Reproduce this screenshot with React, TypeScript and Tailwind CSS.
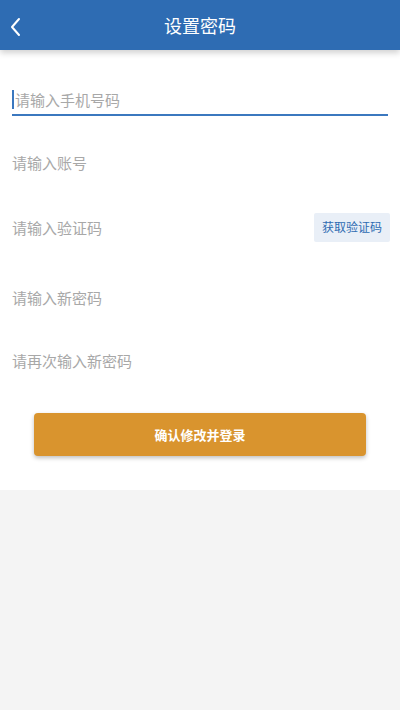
const font = { fontFamily: '"Noto Sans CJK SC", "Noto Sans", sans-serif' }

function Field({ label, className = '' }: { label: string; className?: string }) {
  return (
    <div className={`flex h-[44px] items-center px-3 ${className}`}>
      <span className="text-[15px] leading-none text-[#a8a8a8]">{label}</span>
    </div>
  )
}

export default function App() {
  return (
    <div className="flex min-h-[710px] flex-col bg-[#f4f4f4]" style={font}>
      <header className="relative z-10 flex h-[50px] items-center justify-center bg-[#2e6cb3] shadow-[0_3px_6px_rgba(0,0,0,0.18)]">
        <button className="absolute left-[4px] top-[15px] flex h-6 w-6 items-center justify-center" aria-label="返回">
          <svg width="14" height="20" viewBox="0 0 14 20" fill="none" stroke="white" strokeWidth="2" strokeLinecap="round" strokeLinejoin="round">
            <polyline points="10,2 3,10 10,18" />
          </svg>
        </button>
        <h1 className="text-[18px] leading-none text-white">设置密码</h1>
      </header>

      <main className="bg-white pb-[34px] pt-[28px]">
        <div className="mx-3 flex h-[38px] items-center border-b-2 border-[#3b78bf] pt-[6px]">
          <span className="mr-[1px] h-[19px] w-[2px] bg-[#3b78bf]" />
          <span className="text-[15px] leading-none text-[#a8a8a8]">请输入手机号码</span>
        </div>

        <Field label="请输入账号" className="mt-[24px]" />

        <div className="mt-[21px] flex h-[44px] items-center justify-between pl-3 pr-[10px]">
          <span className="text-[15px] leading-none text-[#a8a8a8]">请输入验证码</span>
          <button className="flex h-[29px] w-[76px] items-center justify-center rounded-[2px] bg-[#e9eff7] text-[12px] text-[#2f6cb2]">
            获取验证码
          </button>
        </div>

        <Field label="请输入新密码" className="mt-[26px]" />
        <Field label="请再次输入新密码" className="mt-[19px]" />

        <div className="mt-[31px] px-[34px]">
          <button className="flex h-[43px] w-full items-center justify-center rounded-[4px] bg-[#d9942e] text-[13px] font-bold text-white shadow-[0_2px_4px_rgba(0,0,0,0.25)]">
            确认修改并登录
          </button>
        </div>
      </main>
    </div>
  )
}
